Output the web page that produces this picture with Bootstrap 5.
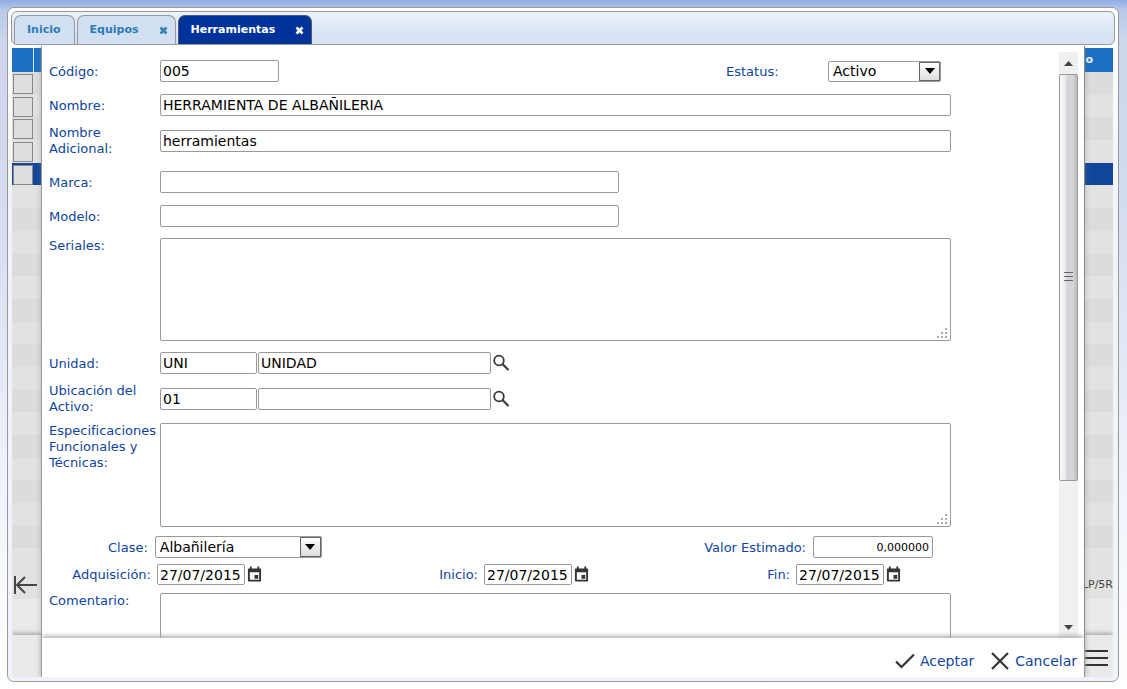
<!DOCTYPE html>
<html lang="es">
<head>
<meta charset="utf-8">
<meta name="viewport" content="width=device-width, initial-scale=1">
<title>Herramientas</title>
<link href="https://cdn.jsdelivr.net/npm/bootstrap@5.3.0/dist/css/bootstrap.min.css" rel="stylesheet">
<style>
  body { font-family: "DejaVu Sans", Verdana, sans-serif; font-size: 13px; line-height: 16px; color: #0f459b; min-height: 100vh;
    background: linear-gradient(#8fabe4 0, #b9c9e9 10px, #cdd6eb 40px, #d4dcef 30%, #f0f4fb 72%, #fff 100%) no-repeat; }
  .shell { height: calc(100vh - 7px); min-height: 640px; padding: 7px 8px 0 7px; }
  .frame { border: 1px solid #999; border-radius: 7px; background: linear-gradient(#fff, #f0f4f8 30%); padding: 3px; }
  .tabbar { height: 34px; border: 1px solid #999; border-radius: 6px; background: linear-gradient(#ecf3fa, #d6e3f4 75%); padding: 3px 2px 0; gap: 2px; }
  .tabbar .nav-link { height: 29px; border: 1px solid #999; border-bottom: 0; border-radius: 7px 7px 0 0; padding: 0 13px 0 12px; color: #2e7db2;
    font-size: 11px; font-weight: 700; background: linear-gradient(#cfdff1, #d4dff3); }
  .tabbar .nav-link.active { background: #003399; border-color: #557; color: #fff; }
  .tabbar svg { width: 9px; height: 9px; margin-left: 20px; margin-right: -6px; }
  .stage { margin: 3px 2px 1px 1px; background: #eaeaea; }
  .backdrop-head { height: 24px; background: #1b70c4; color: #e8f0fa; font-size: 11px; font-weight: 700; padding-right: 20px; }
  .backdrop-head::before { content: ""; width: 22px; border-right: 1px solid #dce9f6; align-self: stretch; margin-right: auto; }
  .stripes > div { flex: 1 1 0; background: #e2e2e2; min-height: 0; }
  .stripes > div:nth-child(odd) { background: #dcdcdc; }
  .stripes > div.picked { background: #12469a; }
  .stripes input { appearance: none; display: block; width: 20px; height: 20px; margin: 2px 1px 0; border: 1px solid #888; background: #dedede; }
  .pager { height: 28px; background: #e2e2e2; color: #444; font-size: 11px; margin-bottom: 36px; }
  .toolrow { height: 42px; background: #eaeaea; box-shadow: 0 -2px 4px #aaa; padding: 4px 5px 0 0; clip-path: inset(-6px 0 0 0); }
  .dialog-pane { position: absolute; top: 0; bottom: 0; left: 29px; right: 28px; background: #fff; border-left: 1px solid #999; border-right: 1px solid #888; box-shadow: 0 0 6px #8886; margin-top: -2px; clip-path: inset(0 -6px 0 -6px); }
  .form-area { padding: 14px 108px 0 7px; }
  .form-area label { padding-top: 1px; }
  .form-line { display: grid; grid-template-columns: 111px minmax(0, 1fr); align-items: center; margin-bottom: 12px; }
  .form-line.tight { margin-bottom: 8px; }
  .form-line.loose { margin-bottom: 14px; }
  .form-line.top { align-items: start; margin-bottom: 11px; }
  .form-line.top.tight { margin-bottom: 9px; }
  .box { border: 1px solid #999; border-radius: 2px; background: #fff; color: #000; font-size: 14px; line-height: 18px; height: 22px; padding: 0 2px; outline: 0; }
  textarea.box { display: block; width: 100%; height: 103px; resize: none; }
  .tight textarea.box { height: 104px; }
  .w-code { width: 119px; } .w-half { width: 58%; } .w-key { width: 97px; } .w-name { width: 233px; margin-left: 1px; }
  .box.w-date { width: 88px; height: 21px; margin-right: 2px; }
  .box.w-amount { width: 120px; font-size: 11px; text-align: right; padding-right: 3px; }
  .combo { border: 1px solid #999; border-radius: 2px; height: 22px; background: #fff; }
  .combo select { appearance: none; border: 0; background: none; outline: 0; padding: 0 4px; width: 100%; font-size: 14px; line-height: 18px; color: #000; }
  .combo span { flex: 0 0 21px; border: 1px solid #666; background: linear-gradient(#fff, #ddd); display: grid; place-items: center; }
  .combo.w-status { width: 113px; height: 21px; margin-right: 10px; } .combo.w-class { width: 167px; }
  .w-status-label { width: 102px; }
  .iconbtn { border: 0; background: none; padding: 0; display: flex; color: #3a3a3a; }
  .classline { padding: 0 18px 0 59px; margin-bottom: 6px; }
  .classline label { margin-right: 7px; }
  .dates { display: grid; grid-template-columns: 213fr 327fr 312fr 50fr; margin-bottom: 8px; }
  .dates label { margin-right: 6px; }
  .grip { position: absolute; right: 3px; bottom: 2px; }
  .rail { width: 19px; margin: 6px 6px 0 0; background: #f0f0f0; }
  .rail > span { height: 22px; flex: none; display: grid; place-items: center; }
  .thumb { height: 75%; border: 1px solid #999; border-radius: 2px; background: linear-gradient(90deg, #fafafa, #e8e8ea 35%, #d3d4d7 40%, #d6d7da 75%, #bbb); display: grid; place-items: center; }
  .actions { height: 39px; background: #fff; box-shadow: 0 -2px 5px #aaa; padding: 6px 7px 0 0; gap: 16px; }
  .actions button { font-size: 14px; color: #0f459b; gap: 5px; }
</style>
</head>
<body>
<div class="shell">
  <main class="frame h-100 d-flex flex-column">
    <nav class="tabbar nav flex-nowrap flex-shrink-0">
      <a class="nav-link d-flex align-items-center" href="#inicio">Inicio</a>
      <a class="nav-link d-flex align-items-center" href="#equipos">Equipos<svg viewBox="0 0 9 9"><path d="M1.5 1.5l6 6m0-6l-6 6" stroke="#3a80b0" stroke-width="2.6"/></svg></a>
      <a class="nav-link active d-flex align-items-center" href="#herramientas">Herramientas<svg viewBox="0 0 9 9"><path d="M1.5 1.5l6 6m0-6l-6 6" stroke="#fff" stroke-width="2.6"/></svg></a>
    </nav>

    <div class="stage position-relative flex-grow-1 d-flex flex-column">
      <div class="backdrop-head d-flex align-items-center flex-shrink-0">o</div>
      <div class="stripes flex-grow-1 d-flex flex-column">
        <div><input type="checkbox" aria-label="Fila 1"></div>
        <div><input type="checkbox" aria-label="Fila 2"></div>
        <div><input type="checkbox" aria-label="Fila 3"></div>
        <div><input type="checkbox" aria-label="Fila 4"></div>
        <div class="picked"><input type="checkbox" aria-label="Fila 5"></div>
        <div></div><div></div><div></div><div></div><div></div><div></div><div></div><div></div><div></div>
        <div></div><div></div><div></div><div></div><div></div><div></div><div></div><div></div>
      </div>
      <div class="pager d-flex align-items-center justify-content-between flex-shrink-0">
        <button class="iconbtn" type="button" aria-label="Primera página"><svg width="26" height="20" viewBox="0 0 26 20" fill="none" stroke="#444" stroke-width="2"><path d="M3 1v18M5 10h20M13 2l-8 8 8 8"/></svg></button>
        <span>LP/5R</span>
      </div>
      <div class="toolrow d-flex align-items-center justify-content-end flex-shrink-0">
        <button class="iconbtn" type="button" aria-label="Menú"><svg width="24" height="18" viewBox="0 0 24 18" stroke="#333" stroke-width="2"><path d="M0 2h24M0 9h24M0 16h24"/></svg></button>
      </div>

      <form class="dialog-pane d-flex flex-column">
        <div class="d-flex flex-grow-1 overflow-hidden">
          <div class="form-area flex-grow-1">
            <div class="form-line">
              <label for="codigo">Código:</label>
              <div class="d-flex align-items-center">
                <input class="box w-code" id="codigo" value="005">
                <label class="ms-auto w-status-label" for="estatus">Estatus:</label>
                <div class="combo w-status d-flex"><select id="estatus"><option>Activo</option></select><span><svg width="10" height="6"><path d="M0 0h10L5 6z"/></svg></span></div>
              </div>
            </div>
            <div class="form-line tight"><label for="nombre">Nombre:</label><input class="box" id="nombre" value="HERRAMIENTA DE ALBAÑILERIA"></div>
            <div class="form-line loose"><label for="adicional">Nombre<br>Adicional:</label><input class="box" id="adicional" value="herramientas"></div>
            <div class="form-line"><label for="marca">Marca:</label><input class="box w-half" id="marca"></div>
            <div class="form-line top"><label for="modelo" class="align-self-center">Modelo:</label><input class="box w-half" id="modelo"></div>
            <div class="form-line top">
              <label class="pt-0" for="seriales">Seriales:</label>
              <div class="position-relative"><textarea class="box" id="seriales"></textarea>
                <svg class="grip" width="12" height="12" fill="#aaa"><path d="M9 1h2v2H9zM5 5h2v2H5zM9 5h2v2H9zM1 9h2v2H1zM5 9h2v2H5zM9 9h2v2H9z"/></svg></div>
            </div>
            <div class="form-line tight">
              <label for="unidad">Unidad:</label>
              <div class="d-flex align-items-center">
                <input class="box w-key" id="unidad" value="UNI">
                <input class="box w-name" value="UNIDAD" aria-label="Nombre de la unidad">
                <button class="iconbtn" type="button" aria-label="Buscar unidad"><svg width="20" height="20" viewBox="0 0 20 20" fill="none" stroke="currentColor"><circle cx="8" cy="7.500" r="4.800" stroke-width="1.800"/><path d="M11.500 11l6 6" stroke-width="2.200"/></svg></button>
              </div>
            </div>
            <div class="form-line tight">
              <label for="ubicacion">Ubicación del<br>Activo:</label>
              <div class="d-flex align-items-center">
                <input class="box w-key" id="ubicacion" value="01">
                <input class="box w-name" aria-label="Nombre de la ubicación">
                <button class="iconbtn" type="button" aria-label="Buscar ubicación"><svg width="20" height="20" viewBox="0 0 20 20" fill="none" stroke="currentColor"><circle cx="8" cy="7.500" r="4.800" stroke-width="1.800"/><path d="M11.500 11l6 6" stroke-width="2.200"/></svg></button>
              </div>
            </div>
            <div class="form-line top tight">
              <label class="pt-0" for="especificaciones">Especificaciones<br>Funcionales y<br>Técnicas:</label>
              <div class="position-relative"><textarea class="box" id="especificaciones"></textarea>
                <svg class="grip" width="12" height="12" fill="#aaa"><path d="M9 1h2v2H9zM5 5h2v2H5zM9 5h2v2H9zM1 9h2v2H1zM5 9h2v2H5zM9 9h2v2H9z"/></svg></div>
            </div>
            <div class="classline d-flex align-items-center justify-content-between">
              <div class="d-flex align-items-center"><label for="clase">Clase:</label>
                <div class="combo w-class d-flex"><select id="clase"><option>Albañilería</option></select><span><svg width="10" height="6"><path d="M0 0h10L5 6z"/></svg></span></div></div>
              <div class="d-flex align-items-center"><label for="valor">Valor Estimado:</label><input class="box w-amount" id="valor" value="0,000000"></div>
            </div>
            <div class="dates">
              <div class="d-flex align-items-center justify-content-end"><label for="adquisicion">Adquisición:</label><input class="box w-date" id="adquisicion" value="27/07/2015"><button class="iconbtn" type="button" aria-label="Calendario de adquisición"><svg width="15" height="17" viewBox="0 0 16 17"><path fill="#333" fill-rule="evenodd" d="M3 0h2v2h6V0h2v2h1q1 0 1 1v12q0 1-1 1H2q-1 0-1-1V3q0-1 1-1h1zM3 6v8h10V6zM8 9h4v4H8z"/></svg></button></div>
              <div class="d-flex align-items-center justify-content-end"><label for="inicio">Inicio:</label><input class="box w-date" id="inicio" value="27/07/2015"><button class="iconbtn" type="button" aria-label="Calendario de inicio"><svg width="15" height="17" viewBox="0 0 16 17"><path fill="#333" fill-rule="evenodd" d="M3 0h2v2h6V0h2v2h1q1 0 1 1v12q0 1-1 1H2q-1 0-1-1V3q0-1 1-1h1zM3 6v8h10V6zM8 9h4v4H8z"/></svg></button></div>
              <div class="d-flex align-items-center justify-content-end"><label for="fin">Fin:</label><input class="box w-date" id="fin" value="27/07/2015"><button class="iconbtn" type="button" aria-label="Calendario de fin"><svg width="15" height="17" viewBox="0 0 16 17"><path fill="#333" fill-rule="evenodd" d="M3 0h2v2h6V0h2v2h1q1 0 1 1v12q0 1-1 1H2q-1 0-1-1V3q0-1 1-1h1zM3 6v8h10V6zM8 9h4v4H8z"/></svg></button></div>
            </div>
            <div class="form-line top"><label class="pt-0" for="comentario">Comentario:</label><textarea class="box" id="comentario"></textarea></div>
          </div>
          <div class="rail d-flex flex-column flex-shrink-0" aria-hidden="true">
            <span><svg width="9" height="5" fill="#444"><path d="M0 5h9L4.500 0z"/></svg></span>
            <div class="flex-grow-1"><div class="thumb"><svg width="10" height="12" stroke="#666"><path d="M0 1.500h9M0 5.500h9M0 9.500h9"/></svg></div></div>
            <span><svg width="9" height="5" fill="#444"><path d="M0 0h9L4.500 5z"/></svg></span>
          </div>
        </div>
        <div class="actions d-flex align-items-center justify-content-end flex-shrink-0 position-relative">
          <button class="iconbtn align-items-center" type="button"><svg width="20" height="16" viewBox="0 0 20 16" fill="none" stroke="#333" stroke-width="2.200"><path d="M1 8.500l5.500 5.500L19 1.500"/></svg>Aceptar</button>
          <button class="iconbtn align-items-center" type="button"><svg width="20" height="18" viewBox="0 0 20 18" stroke="#333" stroke-width="2.200"><path d="M2 1l16 16M18 1L2 17"/></svg>Cancelar</button>
        </div>
      </form>
    </div>
  </main>
</div>
<script src="https://cdn.jsdelivr.net/npm/bootstrap@5.3.0/dist/js/bootstrap.bundle.min.js"></script>
</body>
</html>
